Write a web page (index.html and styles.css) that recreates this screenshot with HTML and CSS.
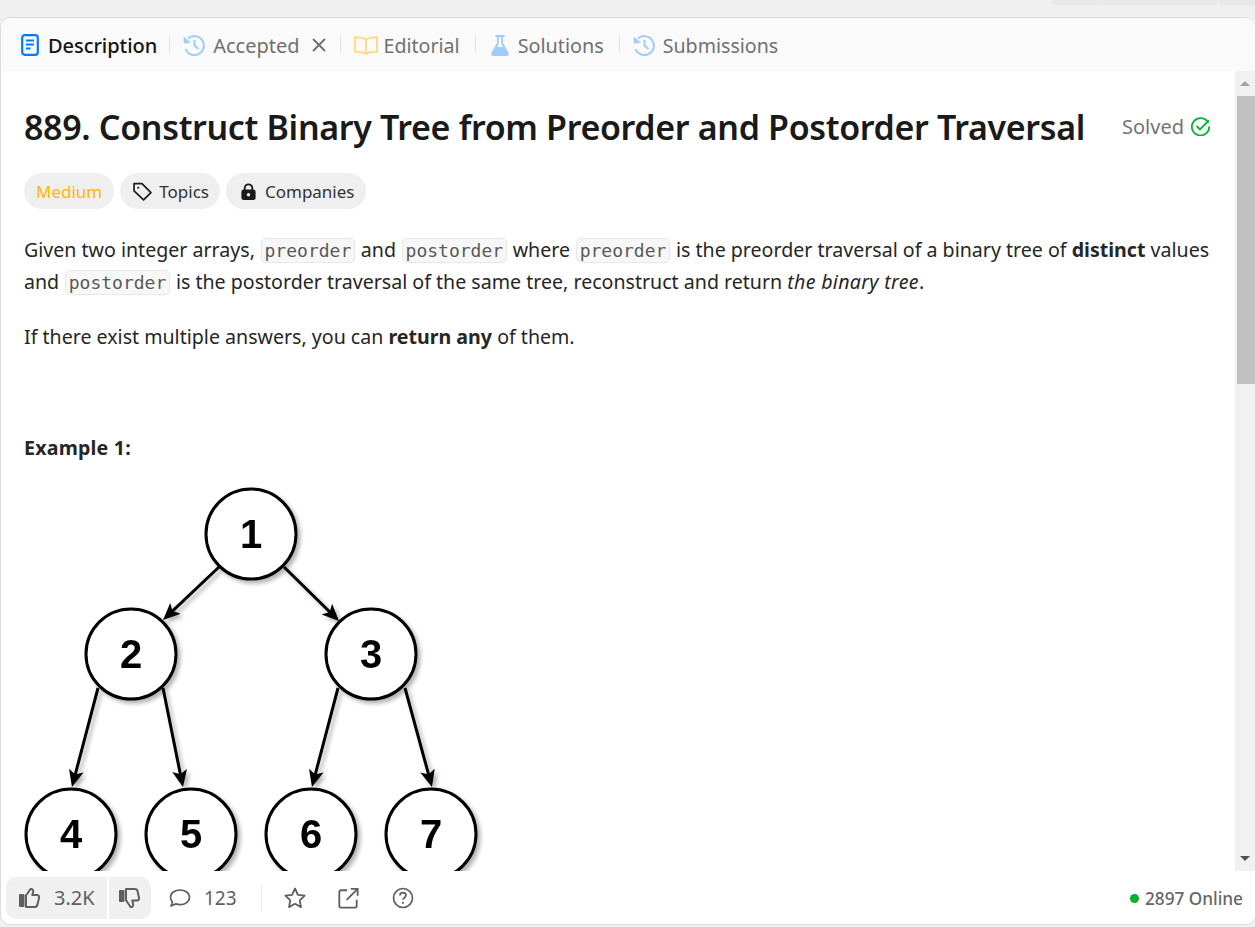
FILE: index.html
```html
<!DOCTYPE html>
<html lang="en">
<head>
<meta charset="utf-8">
<title>889. Construct Binary Tree from Preorder and Postorder Traversal</title>
<link rel="stylesheet" href="styles.css">
</head>
<body>
<div class="top-strip"><div class="top-pill"><span class="seg seg-a"></span><span class="seg seg-b"></span><span class="seg seg-c"></span></div></div>
<main class="card">
  <nav class="tabs">
    <div class="tab tab-active">
      <svg class="ico ico-doc" viewBox="0 0 18 22"><rect x="1.2" y="1.2" width="15.600" height="19.600" rx="2.500" fill="none" stroke="#007aff" stroke-width="2.200"/><path d="M5 6.500h8M5 10.500h8M5 14.500h4.500" stroke="#007aff" stroke-width="1.800" fill="none"/></svg>
      <span>Description</span>
    </div>
    <i class="sep sep-first"></i>
    <div class="tab tab-acc">
      <svg class="ico ico-hist" viewBox="0 0 22 22"><path d="M5 4.500A9.500 9.500 0 1 1 2.500 15" fill="none" stroke="#9fcbff" stroke-width="2"/><path d="M.5 2.500 1 9.500l7-.8z" fill="#9fcbff"/><path d="M11.500 6v5.500l4 3.500" fill="none" stroke="#9fcbff" stroke-width="2"/></svg>
      <span>Accepted</span>
      <svg class="close" viewBox="0 0 14 14"><path d="M1 1l12 12M13 1 1 13" stroke="#707070" stroke-width="1.900" fill="none"/></svg>
    </div>
    <i class="sep"></i>
    <div class="tab tab-ed">
      <svg class="ico ico-book" viewBox="0 0 24 19"><path d="M12 3.500C10 2 7 1.200 1 1.200v14.600c6 0 9 .8 11 2.200 2-1.400 5-2.200 11-2.200V1.200C17 1.200 14 2 12 3.500zM12 3.500V18" fill="none" stroke="#ffdb86" stroke-width="2"/></svg>
      <span>Editorial</span>
    </div>
    <i class="sep"></i>
    <div class="tab tab-sol">
      <svg class="ico ico-flask" viewBox="0 0 18 21"><path d="M4.500 1h9" stroke="#9fcbff" stroke-width="2"/><path d="M6 1.500h6V8l5.500 9.500C18.300 19.300 17.200 21 15.500 21h-13C.8 21-.3 19.300.5 17.500L6 8z" fill="#9fcbff"/><path d="M7.800 2h2.400v6.500l1.700 3.500H6.100l1.700-3.500z" fill="#fafafa"/></svg>
      <span>Solutions</span>
    </div>
    <i class="sep"></i>
    <div class="tab">
      <svg class="ico ico-hist" viewBox="0 0 22 22"><path d="M5 4.500A9.500 9.500 0 1 1 2.500 15" fill="none" stroke="#9fcbff" stroke-width="2"/><path d="M.5 2.500 1 9.500l7-.8z" fill="#9fcbff"/><path d="M11.500 6v5.500l4 3.500" fill="none" stroke="#9fcbff" stroke-width="2"/></svg>
      <span>Submissions</span>
    </div>
  </nav>

  <section class="viewport">
    <article class="content">
      <header class="title-row">
        <h1>889. Construct Binary Tree from Preorder and Postorder Traversal</h1>
        <div class="solved"><span>Solved</span>
          <svg class="solved-ico" viewBox="1 1 18 18"><path d="M17.300 6.500A8.200 8.200 0 1 0 18.200 10" fill="none" stroke="#00b82e" stroke-width="1.700"/><path d="M6.300 9.500l3.200 3.200 8.500-8.500" fill="none" stroke="#00b82e" stroke-width="1.800"/></svg>
        </div>
      </header>
      <div class="chips">
        <span class="chip chip-med">Medium</span>
        <span class="chip"><svg class="chip-ico" viewBox="1 1 18 18"><path d="M2 2.500h7.500l8.500 8.500-7 7-9-8.500z" fill="none" stroke="#1a1a1a" stroke-width="1.600" stroke-linejoin="round"/><circle cx="6" cy="6.500" r="1" fill="#1a1a1a"/></svg>Topics</span>
        <span class="chip"><svg class="chip-ico" viewBox="0 0 20 20"><path d="M6 9V6.500a4 4 0 0 1 8 0V9" fill="none" stroke="#1a1a1a" stroke-width="2"/><rect x="2.500" y="8" width="15" height="11" rx="2.500" fill="#1a1a1a"/><circle cx="10" cy="13.500" r="1.800" fill="#efefef"/></svg>Companies</span>
      </div>
      <p class="para para-1">Given two integer arrays, <code>preorder</code> and <code>postorder</code> where <code>preorder</code> is the preorder traversal of a binary tree of <strong>distinct</strong> values<br>and <code>postorder</code> is the postorder traversal of the same tree, reconstruct and return <em>the binary tree</em>.</p>
      <p class="para para-2">If there exist multiple answers, you can <strong>return any</strong> of them.</p>
      <p class="para example"><strong>Example 1:</strong></p>
      <svg class="tree" viewBox="0 0 460 440" role="img" aria-label="Binary tree with nodes 1 to 7">
        <defs>
          <marker id="arrow" markerUnits="userSpaceOnUse" markerWidth="20" markerHeight="18" refX="11" refY="7.500" orient="auto">
            <path d="M0 0 17 7.500 0 15 4 7.500z" fill="#000"/>
          </marker>
        </defs>
        <g class="tree-g">
          <path class="edge" d="M195 87 143.400 135.900" marker-end="url(#arrow)"/>
          <path class="edge" d="M260 87 310.700 136.800" marker-end="url(#arrow)"/>
          <path class="edge" d="M74 208 49.500 301.200" marker-end="url(#arrow)"/>
          <path class="edge" d="M139 208 157.800 301.200" marker-end="url(#arrow)"/>
          <path class="edge" d="M314 208 289.500 301.200" marker-end="url(#arrow)"/>
          <path class="edge" d="M381 208 406.400 301.200" marker-end="url(#arrow)"/>
          <circle class="node" cx="227" cy="54" r="45"/>
          <circle class="node" cx="107" cy="174" r="45"/>
          <circle class="node" cx="347" cy="174" r="45"/>
          <circle class="node" cx="47" cy="354" r="45"/>
          <circle class="node" cx="167" cy="354" r="45"/>
          <circle class="node" cx="287" cy="354" r="45"/>
          <circle class="node" cx="407" cy="354" r="45"/>
        </g>
        <text class="digit" x="227" y="68">1</text>
        <text class="digit" x="107" y="188">2</text>
        <text class="digit" x="347" y="188">3</text>
        <text class="digit" x="47" y="368">4</text>
        <text class="digit" x="167" y="368">5</text>
        <text class="digit" x="287" y="368">6</text>
        <text class="digit" x="407" y="368">7</text>
      </svg>
    </article>
    <aside class="scrollbar">
      <span class="arrow arrow-up"></span>
      <span class="thumb"></span>
      <span class="track"></span>
      <span class="arrow arrow-down"></span>
    </aside>
  </section>

  <footer class="footer">
    <div class="vote">
      <div class="vote-up">
        <svg class="thumb-ico" viewBox="0 0 22 20"><rect x="1" y="6" width="5.500" height="13" rx="1" fill="#5f5f5f"/><path d="M8 7.500 12.500 1c1.800-.3 3 1.200 2.600 3l-.8 3H19c1.500 0 2.400 1.200 2 2.700l-1.500 6.800c-.3 1.500-1.300 2.500-2.800 2.500H8z" fill="none" stroke="#5f5f5f" stroke-width="2" stroke-linejoin="round"/></svg>
        <span>3.2K</span>
      </div>
      <div class="vote-down">
        <svg class="thumb-ico" viewBox="0 0 22 20"><rect x="1" y="2" width="5.500" height="12" rx="1" fill="#5f5f5f"/><path d="M8 12 12.500 19c1.800.3 3-1.200 2.600-3l-.8-3.500H19c1.500 0 2.400-1.200 2-2.700L19.500 3C19.200 1.500 18.200 1 16.700 1H8z" fill="none" stroke="#5f5f5f" stroke-width="2" stroke-linejoin="round"/></svg>
      </div>
    </div>
    <div class="comments">
      <svg class="f-ico" viewBox="0 0 24 24"><path d="M12 4c5.200 0 9.500 3 9.500 7.300s-4.300 7.300-9.500 7.300c-1.500 0-3-.3-4.200-.7L3 20l1.500-4c-1.300-1.300-2-3-2-4.700C2.500 7 6.800 4 12 4z" fill="none" stroke="#5f5f5f" stroke-width="1.700" stroke-linejoin="round"/></svg>
      <span>123</span>
    </div>
    <i class="f-sep"></i>
    <svg class="f-ico star" viewBox="0 0 24 24"><path d="M12 2.500l2.900 6.300 6.800.8-5 4.700 1.300 6.800-6-3.400-6 3.400 1.300-6.800-5-4.700 6.800-.8z" fill="none" stroke="#5f5f5f" stroke-width="1.800" stroke-linejoin="round"/></svg>
    <svg class="f-ico share" viewBox="0 0 24 24"><path d="M11 3.500H4.500a2 2 0 0 0-2 2v15a2 2 0 0 0 2 2h15a2 2 0 0 0 2-2V14M10.500 14 22 2.500M15 2h7.500v7.500" fill="none" stroke="#5f5f5f" stroke-width="2"/></svg>
    <svg class="f-ico help" viewBox="0 0 24 24"><circle cx="12" cy="12" r="9.500" fill="none" stroke="#5f5f5f" stroke-width="1.700"/><path d="M9 9.500c0-1.800 1.300-2.800 3-2.800s3 1 3 2.600c0 2.400-3 2.300-3 4.500" fill="none" stroke="#5f5f5f" stroke-width="1.800"/><circle cx="12" cy="16.800" r="1.100" fill="#5f5f5f"/></svg>
    <div class="online"><i class="dot"></i><span>2897 Online</span></div>
  </footer>
</main>
</body>
</html>
```
FILE: styles.css
```css
* { box-sizing: border-box; }
html, body { margin: 0; height: 100%; }
body {
  background: #f0f0f0;
  font-family: "Noto Sans", "Open Sans", sans-serif;
  color: #262626;
  overflow: hidden;
  display: flex;
  flex-direction: column;
  height: 927px;
}
.top-strip { height: 17px; display: flex; justify-content: flex-end; flex: none; }
.top-pill { width: 203px; height: 5px; display: flex; gap: 1px; }
.seg { background: #e8e8e8; height: 5px; }
.seg-a { width: 48px; border-bottom-left-radius: 5px; }
.seg-b { width: 117px; }
.seg-c { flex: 1; }
.card {
  flex: none;
  height: 908px;
  margin-bottom: 2px;
  background: #fff;
  border: 1px solid #dcdcdc;
  border-right: 0;
  border-radius: 10px;
  overflow: hidden;
  display: flex;
  flex-direction: column;
}
.tabs {
  flex: none;
  height: 53px;
  background: #fafafa;
  display: flex;
  align-items: center;
  padding-left: 20px;
  font-size: 19.6px;
  color: #707070;
}
.tab { display: flex; align-items: center; gap: 8px; white-space: nowrap; padding-top: 1px; }
.tab-active { color: #141414; font-weight: 500; font-size: 20px; gap: 9px; letter-spacing: -.05px; }
.tab-acc { font-size: 20px; }
.tab-ed { gap: 6px; padding-right: 2px; }
.tab-sol { gap: 9px; padding-right: 2px; margin-left: 2px; font-size: 19.8px; }
.ico { flex: none; }
.ico-doc { width: 18px; height: 22px; }
.ico-hist { width: 22px; height: 22px; }
.ico-book { width: 24px; height: 19px; }
.ico-flask { width: 18px; height: 21px; }
.close { width: 14px; height: 14px; margin: 0 1px 0 4px; flex: none; }
.sep { width: 1px; height: 18px; background: #e4e4e4; margin: 1px 13px 0; flex: none; }
.sep-first { margin-left: 12px; }
.viewport { flex: 1; display: flex; min-height: 0; }
.content { flex: 1; min-width: 0; padding: 0 23px; overflow: hidden; }
.title-row { display: flex; align-items: center; justify-content: space-between; height: 56px; margin-top: 28px; padding-right: 2px; }
h1 { margin: 0; font-size: 34px; letter-spacing: -.34px; font-weight: 600; color: #1a1a1a; white-space: nowrap; }
.solved { display: flex; align-items: center; gap: 7px; font-size: 20px; color: #737373; padding-bottom: 2px; }
.solved-ico { width: 19px; height: 19px; }
.chips { display: flex; gap: 6px; margin-top: 18px; }
.chip {
  height: 36px;
  border-radius: 18px;
  background: #efefef;
  padding: 0 11px 0 13px;
  display: flex;
  align-items: center;
  gap: 7px;
  font-size: 17px;
  color: #333;
}
.chip-med { color: #ffb800; padding: 0 12px; }
.chip-ico { width: 19px; height: 19px; flex: none; }
.para { margin: 0; font-size: 19.6px; line-height: 32px; color: #262626; white-space: nowrap; }
.para-1 { margin-top: 25px; }
.para-2 { margin-top: 23px; }
.para em { letter-spacing: .3px; }
.example { margin-top: 79px; letter-spacing: .2px; }
code {
  font-family: "DejaVu Sans Mono", "Liberation Mono", monospace;
  font-size: 18px;
  line-height: 1;
  color: #5a5a5a;
  background: #f7f7f7;
  border: 1px solid #e8e8e8;
  border-radius: 5px;
  padding: 1px 3px;
  margin: 0 .5px;
}
.tree { display: block; width: 460px; height: 440px; margin-top: 16px; filter: blur(.35px); }
.tree-g { filter: drop-shadow(3px 3px 2px rgba(0,0,0,.3)); }
.node { fill: #fff; stroke: #000; stroke-width: 3; }
.edge { fill: none; stroke: #000; stroke-width: 3; }
.digit { font-family: "Liberation Sans", Arial, sans-serif; font-weight: 700; font-size: 40px; text-anchor: middle; fill: #000; }
.scrollbar { flex: none; width: 20px; background: #f1f1f1; display: flex; flex-direction: column; align-items: center; }
.arrow { flex: none; width: 20px; height: 25px; display: flex; align-items: center; justify-content: center; }
.arrow::before { content: ""; border-left: 5px solid transparent; border-right: 5px solid transparent; }
.arrow-up::before { border-bottom: 5px solid #a3a3a3; }
.arrow-down::before { border-top: 5px solid #505050; }
.thumb { flex: none; width: 18px; height: 288px; background: #c1c1c1; margin-left: 2px; }
.track { flex: 1; }
.footer {
  flex: none;
  height: 53px;
  background: #fff;
  display: flex;
  align-items: center;
  padding: 0 12px 0 5px;
  color: #5f5f5f;
  font-size: 20px;
}
.vote { display: flex; height: 42px; gap: 2px; border-radius: 10px; overflow: hidden; flex: none; }
.vote-up, .vote-down { background: #f0f0f0; display: flex; align-items: center; }
.vote-up { width: 101px; padding-left: 12px; gap: 14px; }
.vote-down { width: 42px; padding-left: 9px; }
.thumb-ico { width: 22px; height: 20px; flex: none; }
.f-ico { width: 24px; height: 24px; flex: none; }
.comments { display: flex; align-items: center; gap: 12px; margin-left: 17px; font-size: 19px; }
.f-sep { width: 1px; height: 26px; background: #e8e8e8; margin: 0 21px 0 24px; flex: none; }
.share { margin-left: 30px; width: 22px; height: 22px; }
.help { margin-left: 32px; }
.online { margin-left: auto; display: flex; align-items: center; gap: 6px; font-size: 17.2px; font-weight: 500; color: #666; padding-top: 1px; }
.dot { width: 9px; height: 9px; border-radius: 50%; background: #00b32a; }
```
